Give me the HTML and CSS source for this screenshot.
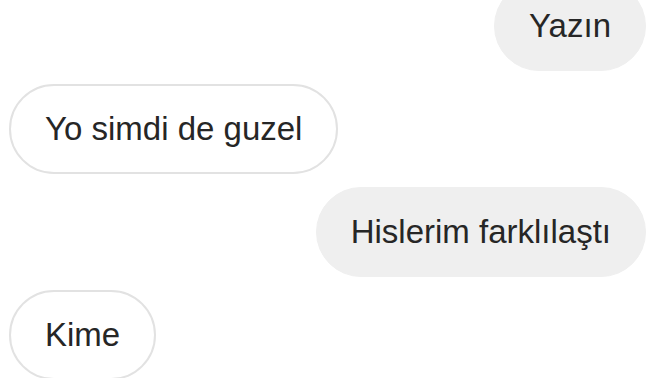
FILE: index.html
```html
<!DOCTYPE html>
<html lang="tr">
<head>
  <meta charset="UTF-8">
  <meta name="viewport" content="width=device-width, initial-scale=1.0">
  <title>Mesajlar</title>
  <link rel="stylesheet" href="styles.css">
</head>
<body>
  <div class="thread">
    <div class="bubble sent">Yazın</div>
    <div class="bubble received">Yo simdi de guzel</div>
    <div class="bubble sent">Hislerim farklılaştı</div>
    <div class="bubble received">Kime</div>
  </div>
</body>
</html>
```

FILE: styles.css
```css
/* General Styles */
body {
  font-family: "Liberation Sans", Arial, sans-serif;
  background-color: #ffffff;
  margin: 0;
  overflow: hidden;
}

.thread {
  display: flex;
  flex-direction: column;
  gap: 13px;
  margin-top: -19px;
  padding: 0 26px 0 9px;
}

.bubble {
  font-size: 33px;
  line-height: 38px;
  color: #262626;
  padding: 25px 34px;
  border-radius: 45px;
  border: 1px solid transparent;
  white-space: nowrap;
}

/* Messages I sent */
.sent {
  align-self: flex-end;
  background-color: #efefef;
  border-color: #efefef;
}

/* Messages from the other person */
.received {
  align-self: flex-start;
  background-color: #ffffff;
  border: 2px solid #e2e2e2;
  padding: 24px 34px;
}
```
